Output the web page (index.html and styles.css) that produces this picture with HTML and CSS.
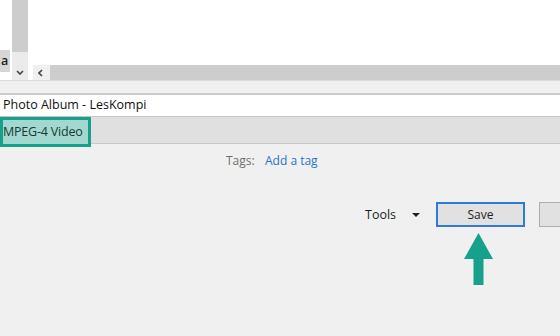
FILE: index.html
```html
<!DOCTYPE html>
<html lang="en">
<head>
  <meta charset="UTF-8">
  <title>Photo Album - LesKompi</title>
  <link rel="stylesheet" href="styles.css">
</head>
<body>
  <!-- Panneau du haut avec barres de défilement -->
  <div class="pane">
    <div class="left-col">
      <div class="blank"></div>
      <div class="chip">a</div>
    </div>
    <div class="vscroll">
      <div class="vthumb"></div>
      <div class="vtrack">
        <svg class="chev" viewBox="0 0 8 5" width="8" height="5"><path d="M1 1 L4 4 L7 1" fill="none" stroke="#444" stroke-width="1.6"/></svg>
      </div>
    </div>
    <div class="gap-col"></div>
    <div class="view">
      <div class="blank"></div>
      <div class="hscroll">
        <svg class="larrow" viewBox="0 0 5 8" width="5" height="8"><path d="M4 1 L1 4 L4 7" fill="none" stroke="#444" stroke-width="1.6"/></svg>
        <div class="hthumb"></div>
      </div>
    </div>
  </div>

  <div class="strip"></div>

  <div class="title-field">Photo Album - LesKompi</div>

  <div class="type-bar">
    <div class="type-tag">MPEG-4 Video</div>
  </div>

  <div class="tags-row">
    <span class="tags-label">Tags:</span>
    <a class="tags-link">Add a tag</a>
  </div>

  <div class="actions">
    <span class="tools">Tools</span>
    <svg class="caret" viewBox="0 0 8 4" width="8" height="4"><path d="M0 0 H8 L4 4 Z" fill="#222"/></svg>
    <button class="btn btn-save">Save</button>
    <button class="btn btn-other"></button>
  </div>

  <div class="pointer">
    <svg viewBox="0 0 29 52" width="29" height="52">
      <path d="M14.5 0 L29 26 L19.5 26 L19.5 52 L9.5 52 L9.5 26 L0 26 Z" fill="#17a08b"/>
    </svg>
  </div>
</body>
</html>
```

FILE: styles.css
```css
* {
  margin: 0;
  padding: 0;
  box-sizing: border-box;
}

body {
  width: 560px;
  height: 336px;
  overflow: hidden;
  background: #f0f0f0;
  font-family: 'Open Sans', sans-serif;
  font-size: 12px;
  color: #1e1e1e;
}

.pane {
  display: flex;
  height: 80px;
  background: #ffffff;
}

.left-col {
  width: 12px;
  display: flex;
  flex-direction: column;
}

.left-col .blank {
  height: 50px;
  background: #ffffff;
}

.chip {
  width: 10px;
  height: 22px;
  background: #d6d6d6;
  font-size: 12.5px;
  font-weight: 600;
  line-height: 22px;
  overflow: hidden;
  text-indent: 1px;
}

.vscroll {
  width: 16px;
  display: flex;
  flex-direction: column;
}

.vthumb {
  height: 52px;
  background: #cdcdcd;
}

.vtrack {
  flex: 1;
  background: #ebebeb;
  display: flex;
  justify-content: center;
  align-items: flex-end;
  padding-bottom: 5px;
}

.gap-col {
  width: 5px;
  background: #ffffff;
}

.view {
  flex: 1;
  display: flex;
  flex-direction: column;
}

.view .blank {
  height: 65px;
}

.hscroll {
  height: 15px;
  display: flex;
  align-items: center;
  background: #f0f0f0;
}

.larrow {
  margin-left: 5px;
  margin-right: 7px;
  flex-shrink: 0;
}

.hthumb {
  flex: 1;
  height: 15px;
  background: #cdcdcd;
}

.strip {
  height: 13px;
  border-top: 1px solid #dcdcdc;
  background: #f0f0f0;
}

.title-field {
  height: 23px;
  border-top: 2px solid #cbcbcb;
  background: #ffffff;
  padding-left: 3px;
  line-height: 19px;
  font-size: 12.5px;
  color: #111;
}

.type-bar {
  height: 28px;
  border-top: 1px solid #c6c6c6;
  border-bottom: 1px solid #c8c8c8;
  background: #e0e0e0;
  position: relative;
}

.type-tag {
  position: absolute;
  left: 0;
  top: 0;
  width: 91px;
  height: 30px;
  border: 3px solid #17a08b;
  background: #a2d8cf;
  line-height: 23px;
  font-size: 12.5px;
  color: #163a35;
  white-space: nowrap;
  letter-spacing: -0.2px;
}

.tags-row {
  display: flex;
  align-items: center;
  height: 32px;
  padding-left: 226px;
  padding-top: 1px;
}

.tags-label {
  color: #6e6e6e;
  width: 39px;
}

.tags-link {
  color: #2b72c9;
}

.actions {
  display: flex;
  align-items: center;
  height: 25px;
  margin-top: 26px;
  padding-left: 365px;
}

.actions > * {
  flex-shrink: 0;
}

.tools {
  width: 47px;
  color: #1e1e1e;
  font-size: 12.5px;
}

.caret {
  margin-right: 16px;
}

.btn {
  height: 25px;
  font-family: inherit;
  font-size: 12px;
  color: #1e1e1e;
  background: #e1e1e1;
}

.btn-save {
  width: 89px;
  border: 2px solid #2f7ad4;
}

.btn-other {
  width: 30px;
  margin-left: 14px;
  border: 1px solid #adadad;
}

.pointer {
  padding-left: 464px;
  padding-top: 6px;
}

.pointer svg {
  display: block;
}
```
